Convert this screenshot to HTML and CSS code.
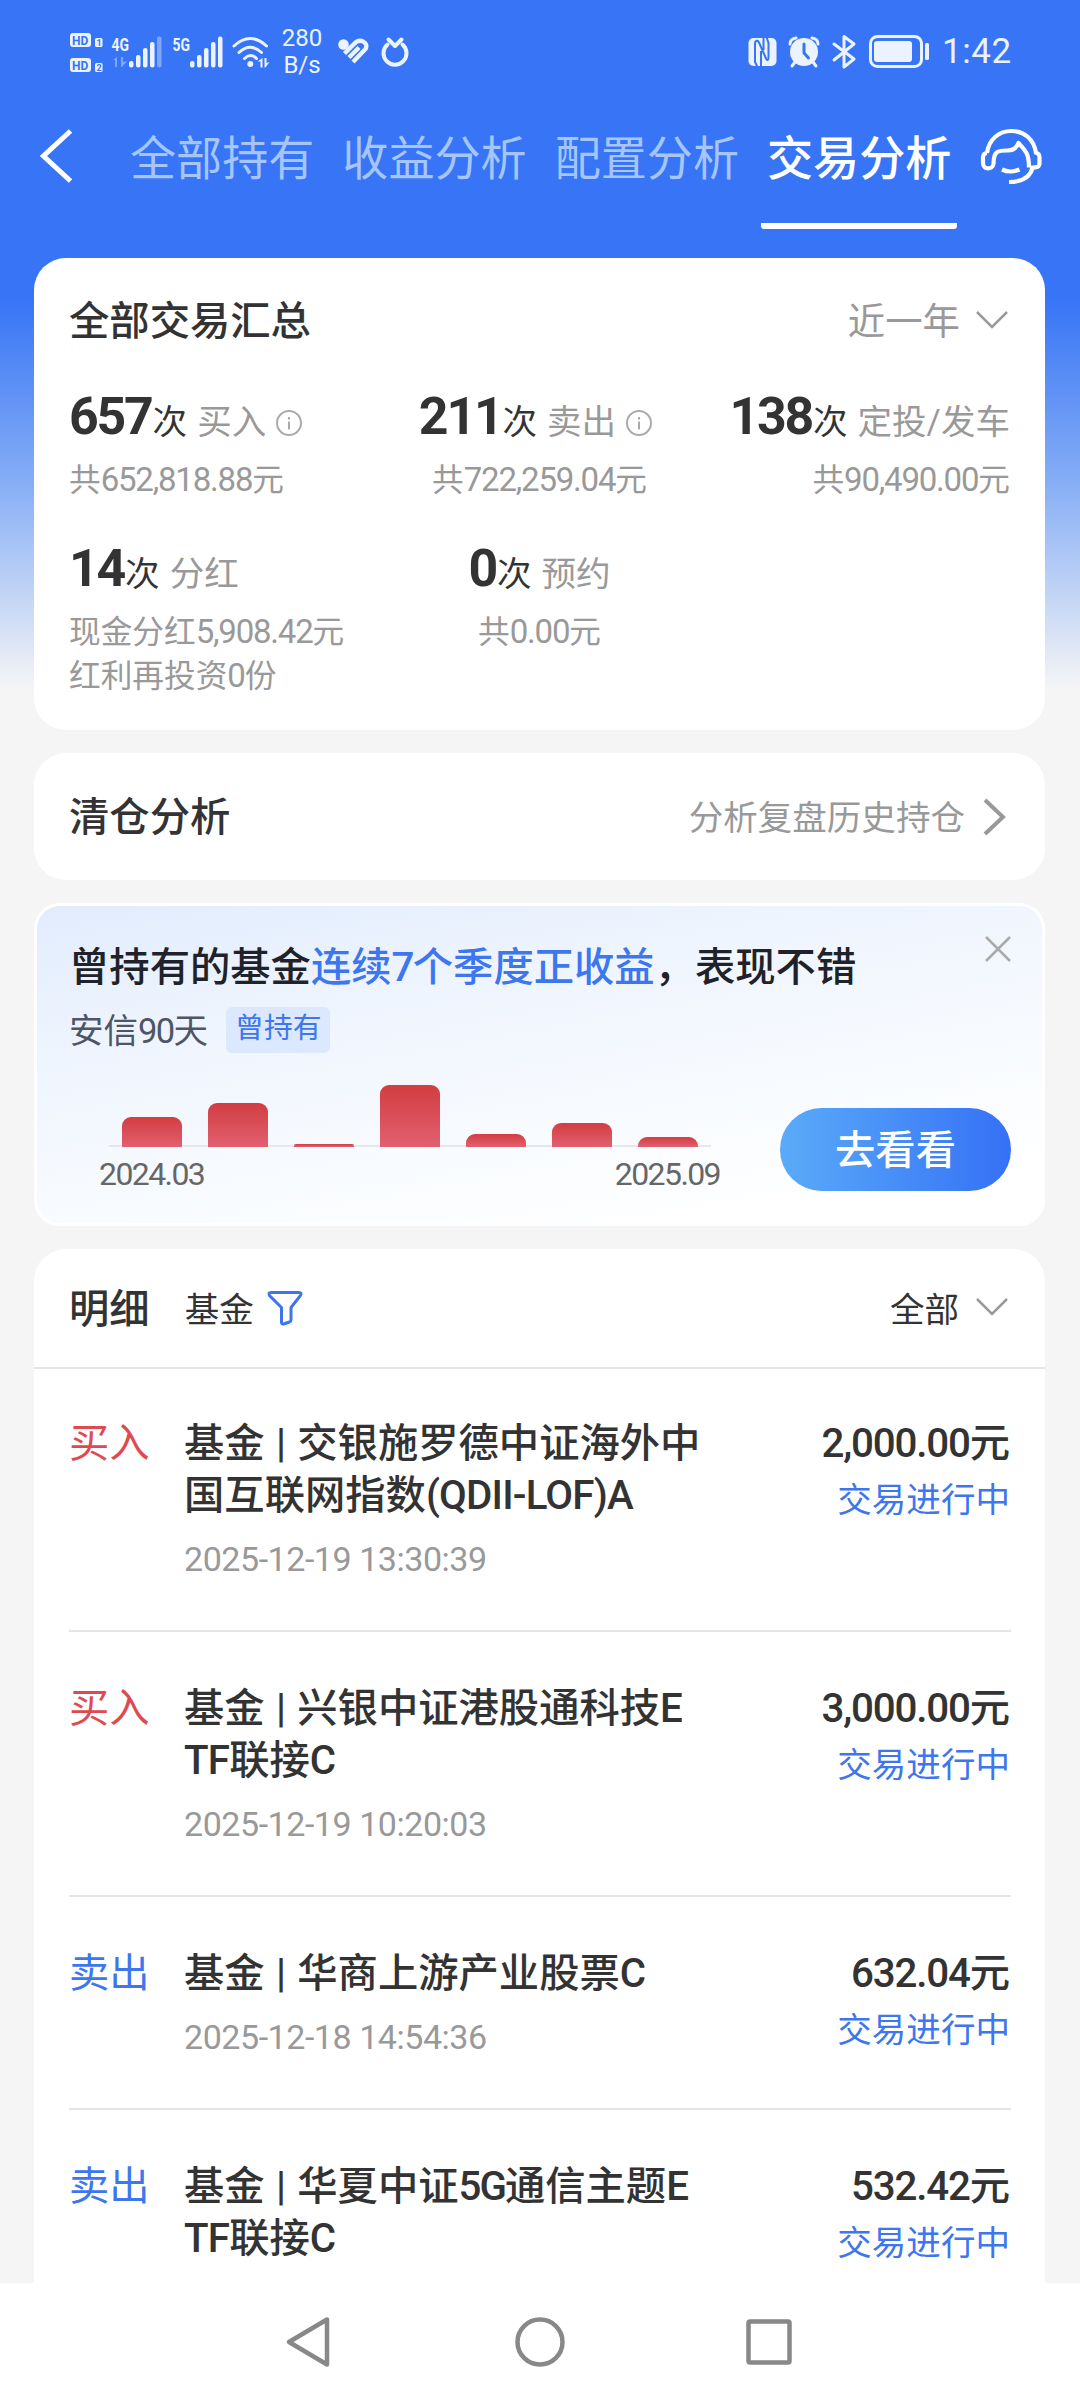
FILE: index.html
```html
<!DOCTYPE html>
<html lang="zh-CN">
<head>
<meta charset="utf-8">
<title>交易分析</title>
<link rel="stylesheet" href="styles.css">
</head>
<body>
<div class="screen">
  <div class="statusbar">
    <div class="status-left">
      <svg class="ic-hd" width="34" height="50" viewBox="70 28 34 50">
        <rect x="70" y="33" width="21" height="14" rx="3"/><rect x="70" y="58" width="21" height="14" rx="3"/>
        <rect x="95" y="38" width="7.500" height="9" rx="1.500"/><rect x="95" y="63" width="7.500" height="9" rx="1.500"/>
        <text x="72" y="44.500" class="hd-t">HD</text><text x="72" y="69.500" class="hd-t">HD</text>
        <text x="96.500" y="46" class="hd-n">1</text><text x="96.500" y="71" class="hd-n">2</text>
      </svg>
      <svg class="ic-4g" width="52" height="46" viewBox="111 29 52 46">
        <text x="111.500" y="50.500" class="gen" textLength="17.500" lengthAdjust="spacingAndGlyphs">4G</text>
        <path class="dim" d="M113 60l4-3v10h-2v-7zM121 57h2v5l4-1-5 6h-1z"/>
        <rect x="129" y="61" width="4.500" height="6.500" rx="2"/><rect x="136" y="55" width="4.500" height="12.500" rx="2"/><rect x="143" y="48" width="4.500" height="19.500" rx="2"/><rect x="150" y="42" width="4.500" height="25.500" rx="2"/><rect class="dim" x="157" y="36.500" width="4.500" height="31" rx="2"/>
      </svg>
      <svg class="ic-5g" width="52" height="46" viewBox="172 29 52 46">
        <text x="172.500" y="50.500" class="gen" textLength="17.500" lengthAdjust="spacingAndGlyphs">5G</text>
        <rect x="190" y="61" width="4.500" height="6.500" rx="2"/><rect x="197" y="55" width="4.500" height="12.500" rx="2"/><rect x="204" y="48" width="4.500" height="19.500" rx="2"/><rect x="211" y="42" width="4.500" height="25.500" rx="2"/><rect x="218" y="36.500" width="4.500" height="31" rx="2"/>
      </svg>
      <svg class="ic-wifi" width="38" height="34" viewBox="232 35 38 34">
        <path class="ln" d="M234 46q16-15 32.500 0M239 52.500q11-10.500 22.500 0M244.500 58.500q6-6 12 0"/>
        <circle cx="250.300" cy="64" r="3"/>
        <path d="M257.500 61.500l5-3.500v9.500h-2v-6zM264.500 58h2v5l3-1-4 5.500h-1z"/>
      </svg>
      <div class="speed"><span>280</span><span>B/s</span></div>
      <svg class="ic-heart" width="32" height="30" viewBox="337 37 32 30">
        <circle cx="343.500" cy="44.500" r="5.300"/>
        <path class="stripe" d="M344.500 53.500L354 44C360 37.500 369 42.500 365.500 49L353 62M349 57.500L359 47.500"/>
      </svg>
      <svg class="ic-ring" width="30" height="32" viewBox="380 36 30 32">
        <path class="ring" d="M387.500 44.500A11.500 11.500 0 1 0 402.500 44.500"/>
        <path class="ring" d="M388.500 39.500l6.500 6.500 6.500-6.500"/>
      </svg>
    </div>
    <div class="status-right">
      <svg width="30" height="30" viewBox="748 37 30 30">
        <rect x="748.500" y="38" width="28" height="28" rx="5"/>
        <path class="cut" d="M757.500 67L755 62V44c0-4 3-4 4-1.500l7 16c1 2.500 2.500 1.500 2.500-1V43l-2-6M761 51v16M763.500 37v13"/>
      </svg>
      <svg class="ic-alarm" width="34" height="34" viewBox="787 35 34 34">
        <circle cx="804" cy="52" r="14"/><path class="ln" d="M795 62l-3 4M813 62l3 4M790 44q0-5 6-6M818 44q0-5-6-6"/>
        <path class="cut2" d="M804 44v9l4.500 5"/>
      </svg>
      <svg class="ic-bt" width="26" height="36" viewBox="831 35 26 36">
        <path class="ln" d="M834 45l20 15-10 8V37.500l10 7.500-20 16"/>
      </svg>
      <svg class="ic-bat" width="62" height="34" viewBox="868 36 62 34">
        <rect class="ln" x="870.500" y="37.500" width="51" height="30" rx="7"/><rect x="874" y="42" width="38" height="21" rx="3"/><rect x="925" y="44" width="4" height="17" rx="1.500"/>
      </svg>
      <span class="time">1:42</span>
    </div>
  </div>

  <nav class="topnav">
    <svg class="back" width="34" height="56" viewBox="40 128 34 56"><path d="M70.500 131L43.500 156l27 25"/></svg>
    <div class="tabs">
      <span class="tab">全部持有</span><span class="tab">收益分析</span><span class="tab">配置分析</span><span class="tab active">交易分析</span>
    </div>
    <svg class="service" width="62" height="60" viewBox="980 127 62 60">
      <path d="M987 153C989 139 999 131 1011.500 131S1034 139 1036 153C1039 153 1039.500 155 1039.500 158v5C1039.500 167 1037 168 1030 167.500M987 153C984 153 983 155 983 158v5c0 7 9.500 7 10.500 1C993.500 150 999 150.500 1008 150.500Q1016 150 1018.500 143C1026 151 1029 154 1029 167.500M1032.500 168C1030 177 1022 182 1009 182M1002 169.500q8 4 17.500 0"/>
    </svg>
  </nav>

  <main class="content">
    <section class="card summary">
      <div class="card-head">
        <h2>全部交易汇总</h2>
        <div class="range"><span>近一年</span><svg class="chev" width="32" height="20" viewBox="0 0 32 20"><path d="M1 2l15 15L31 2"/></svg></div>
      </div>
      <div class="stats">
        <div class="stat">
          <div class="count"><b>657</b><i>次</i>买入<svg class="info" width="26" height="26" viewBox="0 0 26 26"><circle cx="13" cy="13" r="12"/><path d="M13 11.500v8M13 7v2.500"/></svg></div>
          <div class="sum">共<span class="n">652,818.88</span>元</div>
        </div>
        <div class="stat mid">
          <div class="count shift"><b>211</b><i>次</i>卖出<svg class="info" width="26" height="26" viewBox="0 0 26 26"><circle cx="13" cy="13" r="12"/><path d="M13 11.500v8M13 7v2.500"/></svg></div>
          <div class="sum">共<span class="n">722,259.04</span>元</div>
        </div>
        <div class="stat end">
          <div class="count"><b>138</b><i>次</i>定投/发车</div>
          <div class="sum">共<span class="n">90,490.00</span>元</div>
        </div>
        <div class="stat">
          <div class="count"><b>14</b><i>次</i>分红</div>
          <div class="sum">现金分红<span class="n">5,908.42</span>元<br>红利再投资<span class="n">0</span>份</div>
        </div>
        <div class="stat mid">
          <div class="count"><b>0</b><i>次</i>预约</div>
          <div class="sum">共<span class="n">0.00</span>元</div>
        </div>
      </div>
    </section>

    <section class="card link-card">
      <h2>清仓分析</h2>
      <div class="more"><span>分析复盘历史持仓</span><svg width="24" height="38" viewBox="0 0 24 38"><path d="M2 2l18 17L2 36"/></svg></div>
    </section>

    <section class="promo">
      <svg class="close" width="28" height="28" viewBox="0 0 28 28"><path d="M2 2l24 24M26 2L2 26"/></svg>
      <div class="promo-title">曾持有的基金<em>连续<span class="n">7</span>个季度正收益</em>，表现不错</div>
      <div class="promo-sub"><span class="fund">安信<span class="n">90</span>天</span><span class="tag">曾持有</span></div>
      <div class="promo-body">
        <div class="chart">
          <div class="bars">
            <div class="bar" style="height:30px"></div><div class="bar" style="height:44px"></div><div class="bar flat" style="height:3px"></div><div class="bar" style="height:62px"></div><div class="bar" style="height:13px"></div><div class="bar" style="height:24px"></div><div class="bar" style="height:10px"></div>
          </div>
          <div class="axis"><span>2024.03</span><span>2025.09</span></div>
        </div>
        <div class="go">去看看</div>
      </div>
    </section>

    <section class="card details">
      <div class="details-head">
        <h2>明细</h2>
        <span class="kind">基金</span>
        <svg class="funnel" width="36" height="36" viewBox="0 0 36 36"><path d="M4 2.500h28q3 0 1.500 3L24 17.500V30q0 1.500-1.500 2l-6 2q-2 .5-2-2V17.500L2.500 5.500Q1 2.500 4 2.500z"/></svg>
        <div class="filter">全部<svg class="chev" width="32" height="20" viewBox="0 0 32 20"><path d="M1 2l15 15L31 2"/></svg></div>
      </div>
      <div class="list">
        <div class="row">
          <span class="side buy">买入</span>
          <div class="info-col"><div class="name">基金 | 交银施罗德中证海外中<br>国互联网指数<span class="l">(QDII-LOF)A</span></div><div class="date">2025-12-19 13:30:39</div></div>
          <div class="amt"><div class="money"><span class="n">2,000.00</span>元</div><div class="state">交易进行中</div></div>
        </div>
        <div class="row">
          <span class="side buy">买入</span>
          <div class="info-col"><div class="name">基金 | 兴银中证港股通科技E<br><span class="l">TF</span>联接<span class="l">C</span></div><div class="date">2025-12-19 10:20:03</div></div>
          <div class="amt"><div class="money"><span class="n">3,000.00</span>元</div><div class="state">交易进行中</div></div>
        </div>
        <div class="row">
          <span class="side sell">卖出</span>
          <div class="info-col"><div class="name">基金 | 华商上游产业股票C</div><div class="date">2025-12-18 14:54:36</div></div>
          <div class="amt"><div class="money"><span class="n">632.04</span>元</div><div class="state">交易进行中</div></div>
        </div>
        <div class="row">
          <span class="side sell">卖出</span>
          <div class="info-col"><div class="name">基金 | 华夏中证<span class="g">5G</span>通信主题E<br><span class="l">TF</span>联接<span class="l">C</span></div></div>
          <div class="amt"><div class="money"><span class="n">532.42</span>元</div><div class="state">交易进行中</div></div>
        </div>
      </div>
    </section>
  </main>

  <footer class="sysnav">
    <svg width="46" height="54" viewBox="0 0 46 54"><path d="M42 4.500v45L4 27z"/></svg>
    <svg class="home" width="54" height="54" viewBox="0 0 54 54"><circle cx="27" cy="27" r="22.500"/></svg>
    <svg width="50" height="50" viewBox="0 0 50 50"><rect x="4.500" y="4.500" width="41" height="41" rx="1.500"/></svg>
  </footer>
</div>
</body>
</html>
```
FILE: styles.css
```css
* { box-sizing: border-box; }
body { margin: 0; font-family: Roboto, "Noto Sans CJK SC", sans-serif; color: #333; }
svg { display: block; flex: none; }
h2 { margin: 0; padding-top: 3px; font-size: 40.32px; font-weight: 500; line-height: 52px; }
.screen {
  width: 1080px; height: 2400px; overflow: hidden;
  display: flex; flex-direction: column;
  background: linear-gradient(#3875f6 0, #3875f6 300px, #85adf5 480px, #f5f5f5 690px);
}

/* status bar */
.statusbar { height: 104px; display: flex; justify-content: space-between; padding: 0 71px 0 70px; flex: none; fill: #eaf3ff; color: #eaf3ff; }
.status-left, .status-right { display: flex; align-items: center; }
.ln { fill: none; stroke: #eaf3ff; stroke-width: 3; stroke-linecap: round; stroke-linejoin: round; }
.dim { opacity: .4; }
.hd-t { font: 700 12px Roboto; fill: #3875f6; }
.hd-n { font: 700 9px Roboto; fill: #3875f6; }
.gen { font: 700 19px Roboto; }
.ic-hd { margin-top: 2px; }
.ic-4g { margin-left: 7px; }
.ic-5g { margin-left: 9px; }
.ic-wifi { margin-left: 8px; }
.speed { width: 60px; margin-left: 2px; display: flex; flex-direction: column; align-items: center; font-size: 24px; line-height: 27px; }
.ic-heart { margin-left: 5px; }
.ic-ring { margin-left: 11px; }
.stripe { fill: none; stroke: #eaf3ff; stroke-width: 4.400; }
.ring { fill: none; stroke: #eaf3ff; stroke-width: 4; stroke-linecap: round; stroke-linejoin: round; }
.cut { fill: none; stroke: #3875f6; stroke-width: 2; }
.cut2 { fill: none; stroke: #3875f6; stroke-width: 3; stroke-linecap: round; }
.ic-alarm { margin-left: 9px; }
.ic-bt { margin-left: 10px; }
.ic-bat { margin-left: 11px; }
.time { margin-left: 12px; font-size: 35px; line-height: 40px; width: 67px; letter-spacing: .6px; white-space: nowrap; }

/* tabs */
.topnav { height: 154px; flex: none; display: flex; align-items: flex-start; padding: 0 38px 0 40px; }
.back { margin-top: 24px; }
.back path { fill: none; stroke: #fff; stroke-width: 5; }
.tabs { display: flex; margin-left: 50px; gap: 16px; }
.tab { height: 125px; padding: 25px 6px 0; font-size: 46.08px; line-height: 60px; color: #a4c6fc; white-space: nowrap; }
.tab.active { color: #fff; font-weight: 500; border-bottom: 6px solid #fff; border-radius: 0 0 3px 3px; }
.service { margin-left: 23px; margin-top: 23px; }
.service path { fill: none; stroke: #fff; stroke-width: 4.200; stroke-linejoin: round; }

/* cards */
.content { flex: 1; min-height: 0; overflow: hidden; display: flex; flex-direction: column; gap: 23px; padding: 0 35px 0 34px; }
.card { background: #fff; border-radius: 32px; flex: none; }
.summary { height: 472px; padding: 36px 35px 0 35px; }
.card-head { display: flex; justify-content: space-between; align-items: center; height: 52px; }
.range { display: flex; align-items: center; gap: 16px; font-size: 37.44px; color: #999; padding-right: 2px; }
.range span { margin-top: -2px; }
.chev path { fill: none; stroke: #999; stroke-width: 2.500; }
.stats { display: grid; grid-template-columns: 1fr 1fr 1fr; grid-auto-rows: 152px; padding-top: 28px; }
.stat { display: flex; flex-direction: column; align-items: flex-start; white-space: nowrap; }
.stat.mid { align-items: center; }
.stat.end { align-items: flex-end; }
.count { flex: none; display: flex; align-items: baseline; font-size: 34.56px; line-height: 86px; height: 84px; color: #999; }
.count b { font-size: 51.84px; font-weight: 700; font-stretch: 90%; letter-spacing: -2.200px; color: #333; }
.count i { font-style: normal; margin: 0 10px 0 1px; color: #333; }
.count.shift { margin-right: 8px; }
.info { margin-left: 10px; align-self: flex-start; margin-top: 36px; }
.info circle, .info path { fill: none; stroke: #aaa; stroke-width: 2; }
.sum { font-size: 31.68px; line-height: 43px; color: #999; }
.sum .n { font-size: 33px; letter-spacing: -1.200px; }
.link-card { height: 127px; display: flex; align-items: center; justify-content: space-between; padding: 0 38px 0 35px; }
.more { display: flex; align-items: center; gap: 18px; font-size: 34.56px; color: #999; }
.more span { margin-top: -4px; }
.more path { fill: none; stroke: #999; stroke-width: 4; }

/* promo */
.promo {
  position: relative; flex: none; height: 323px; border: 3px solid #fff; border-radius: 26px; padding: 36px 31px 0 32px;
  background: linear-gradient(170deg, #e1ecfd 0%, #eff5fe 32%, #f8fbff 64%, #fff 88%);
}
.close { position: absolute; right: 30px; top: 29px; }
.close path { fill: none; stroke: #aaa; stroke-width: 2.500; }
.promo-title { font-size: 40.32px; line-height: 52px; font-weight: 500; color: #1f2329; white-space: nowrap; }
.promo-title em { font-style: normal; color: #3d76ee; }
.promo .n { letter-spacing: -1.700px; }
.promo-sub { display: flex; align-items: center; gap: 18px; margin-top: 13px; height: 46px; font-size: 34.56px; color: #4e5565; }
.fund { margin-top: -5px; }
.tag { height: 46px; line-height: 43px; padding: 0 9px; border-radius: 6px; background: #dce8fd; color: #3d76ee; font-size: 28.8px; }
.promo-body { display: flex; justify-content: space-between; margin-top: 30px; }
.chart { width: 640px; padding-left: 30px; }
.bars { height: 64px; width: 602px; margin-left: 10px; padding: 0 13px; display: flex; align-items: flex-end; justify-content: space-between; border-bottom: 2px solid #e5e7ea; }
.bar { width: 60px; margin-bottom: -2px; border-radius: 9px 9px 0 0; background: linear-gradient(#d23d41, #e26070); }
.bar.flat { border-radius: 2px 2px 0 0; }
.axis { display: flex; justify-content: space-between; width: 621px; margin-top: 6px; font-size: 32px; line-height: 42px; letter-spacing: -1.600px; color: #666; }
.go { width: 231px; height: 83px; margin-top: 25px; border-radius: 42px; background: linear-gradient(90deg, #5aabf9, #3571f6); color: #fff; font-size: 40.32px; font-weight: 500; line-height: 85px; text-align: center; }

/* details */
.details { height: 1100px; }
.details-head { height: 120px; display: flex; align-items: center; padding: 0 37px 0 35px; border-bottom: 2px solid #e4e4e4; }
.kind { margin-left: 35px; font-size: 34.56px; margin-top: -3px; }
.funnel { margin-left: 13px; }
.funnel path { fill: none; stroke: #3d76ee; stroke-width: 3; }
.filter { margin-left: auto; margin-top: -3px; display: flex; align-items: center; gap: 17px; font-size: 34.56px; }
.list { padding: 0 34px 0 35px; margin-top: -2px; }
.row { display: flex; padding: 51px 0 45px; border-bottom: 2px solid #e4e4e4; white-space: nowrap; }
.row:last-child { border-bottom: 0; }
.side { width: 115px; font-size: 40.32px; line-height: 52px; }
.buy { color: #df4a50; }
.sell { color: #3d76ee; }
.name { font-size: 40.32px; line-height: 52px; font-weight: 500; word-spacing: 1.300px; }
.l { letter-spacing: -.8px; }
.g { letter-spacing: -2px; }
.date { margin-top: 12px; font-size: 34px; line-height: 51px; letter-spacing: -.45px; color: #999; }
.amt { margin-left: auto; text-align: right; padding-right: 1px; }
.money { font-size: 40.32px; line-height: 52px; font-weight: 500; }
.money .n { letter-spacing: -1.200px; }
.state { margin-top: 7px; font-size: 34.56px; line-height: 46px; color: #3d76ee; }

/* system navigation */
.sysnav { flex: none; height: 117px; background: #fff; display: flex; align-items: center; padding-left: 285px; }
.sysnav svg { fill: none; stroke: #888; stroke-width: 4.500; stroke-linejoin: round; }
.home { margin: 0 177px 0 182px; }
```
